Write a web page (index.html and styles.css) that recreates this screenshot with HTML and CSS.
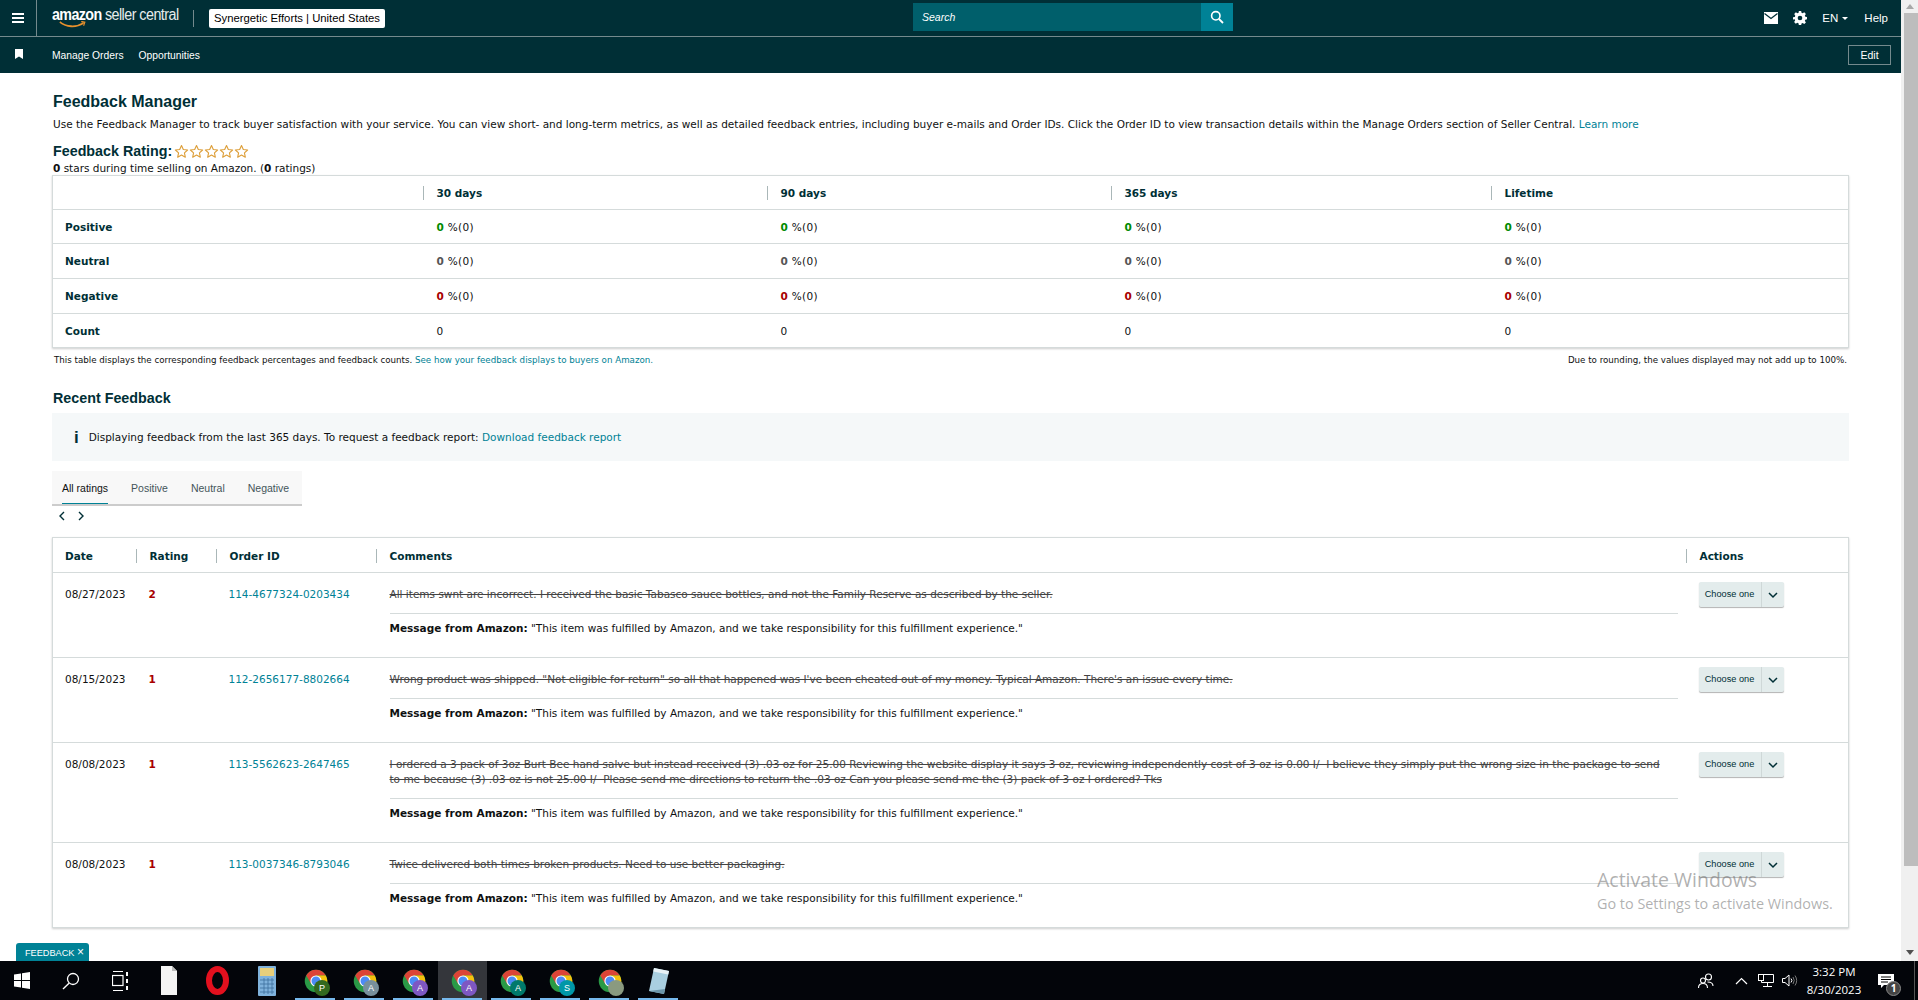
FILE: index.html
```html
<!DOCTYPE html>
<html lang="en">
<head>
<meta charset="utf-8">
<title>Feedback Manager</title>
<link rel="stylesheet" href="styles.css">
</head>
<body>
<svg class="defs" width="0" height="0" aria-hidden="true">
  <symbol id="star" viewBox="0 0 24 24"><path d="M12 2.500l2.900 6.300 6.900.8-5.100 4.700 1.400 6.800-6.100-3.400-6.100 3.400 1.400-6.800L2.200 9.600l6.900-.8z" fill="none" stroke="#dd9f3a" stroke-width="1.800" stroke-linejoin="round"/></symbol>
  <symbol id="chev" viewBox="0 0 12 12"><path d="M2 4l4 4 4-4" fill="none" stroke="#002f36" stroke-width="1.500"/></symbol>
  <symbol id="chrome" viewBox="0 0 32 32">
    <circle cx="16" cy="16" r="15" fill="#2a9a46"/>
    <path d="M3 8.500A15 15 0 0 1 29 8.500L16 8.500 9.500 19.700z" fill="#dc4437"/>
    <path d="M29 8.500A15 15 0 0 1 16 31L22.500 19.700 16 8.500z" fill="#f4c20d"/>
    <circle cx="16" cy="16" r="7.500" fill="#fff"/>
    <circle cx="16" cy="16" r="6" fill="#4c8bf5"/>
  </symbol>
</svg>
<div class="screen">
  <div class="window">
    <div class="page">
      <header class="topbar">
        <button class="burger" aria-label="Menu"><span></span><span></span><span></span></button>
        <div class="logo">
          <span class="logo-text"><b>amazon</b> seller central</span>
          <svg class="smile" width="27" height="7" viewBox="0 0 34 7" preserveAspectRatio="none"><path d="M1 1c8 5 20 6 30 1" fill="none" stroke="#e8912d" stroke-width="1.800"/><path d="M28 .5l4.500 .8-1.500 3.500" fill="none" stroke="#e8912d" stroke-width="1.400"/></svg>
        </div>
        <span class="logo-sep"></span>
        <span class="account">Synergetic Efforts | United States</span>
        <div class="search">
          <span class="search-label">Search</span>
          <span class="search-btn">
            <svg width="14" height="14" viewBox="0 0 14 14"><circle cx="5.800" cy="5.800" r="4.200" fill="none" stroke="#fff" stroke-width="1.600"/><path d="M9 9l4 4" stroke="#fff" stroke-width="1.800"/></svg>
          </span>
        </div>
        <div class="top-right">
          <svg class="top-ico" width="14" height="12" viewBox="0 0 14 12"><path d="M0 0h14v12H0z" fill="#fff"/><path d="M.5 1.500L7 6.500l6.500-5" fill="none" stroke="#002f36" stroke-width="1.300"/></svg>
          <svg class="top-ico" width="14" height="14" viewBox="0 0 24 24"><path fill="#fff" fill-rule="evenodd" d="M10 1h4l.6 3.200 2 .8L19.300 3.200l2.800 2.800-1.800 2.700.8 2 3.100.6v4l-3.100.6-.8 2 1.800 2.700-2.800 2.800-2.700-1.800-2 .8L14 25h-4l-.6-3.200-2-.8-2.700 1.800-2.800-2.800 1.800-2.700-.8-2L0 15.700v-4l3.100-.6.800-2L2.100 6l2.800-2.800L7.600 5l2-.8zM12 9a4 4 0 1 0 0 8 4 4 0 0 0 0-8z" transform="translate(0 -1)"/></svg>
          <span class="lang">EN<i class="caret"></i></span>
          <span class="help">Help</span>
        </div>
      </header>
      <nav class="navbar">
        <svg class="bookmark" width="8" height="10" viewBox="0 0 8 10"><path d="M0 0h8v10L4 7.500 0 10z" fill="#fff"/></svg>
        <a class="nav-link">Manage Orders</a>
        <a class="nav-link">Opportunities</a>
        <span class="edit">Edit</span>
      </nav>

      <main class="content">
        <h1 class="title">Feedback Manager</h1>
        <p class="desc">Use the Feedback Manager to track buyer satisfaction with your service. You can view short- and long-term metrics, as well as detailed feedback entries, including buyer e-mails and Order IDs. Click the Order ID to view transaction details within the Manage Orders section of Seller Central. <a class="link">Learn more</a></p>
        <div class="rating">
          <h2 class="rating-label">Feedback Rating:</h2>
          <span class="stars">
            <svg width="15" height="15"><use href="#star"/></svg><svg width="15" height="15"><use href="#star"/></svg><svg width="15" height="15"><use href="#star"/></svg><svg width="15" height="15"><use href="#star"/></svg><svg width="15" height="15"><use href="#star"/></svg>
          </span>
        </div>
        <p class="stars-line"><b>0</b> stars during time selling on Amazon. (<b>0</b> ratings)</p>

        <table class="card summary">
          <colgroup><col class="s1"><col class="s2"><col class="s2"><col class="s3"><col></colgroup>
          <thead>
            <tr class="r34"><th></th><th><div class="th-in">30 days</div></th><th><div class="th-in">90 days</div></th><th><div class="th-in">365 days</div></th><th><div class="th-in">Lifetime</div></th></tr>
          </thead>
          <tbody>
            <tr class="r34"><th class="rowh">Positive</th><td><b class="good">0</b> %(0)</td><td><b class="good">0</b> %(0)</td><td><b class="good">0</b> %(0)</td><td><b class="good">0</b> %(0)</td></tr>
            <tr class="r35"><th class="rowh">Neutral</th><td><b class="mid">0</b> %(0)</td><td><b class="mid">0</b> %(0)</td><td><b class="mid">0</b> %(0)</td><td><b class="mid">0</b> %(0)</td></tr>
            <tr class="r35"><th class="rowh">Negative</th><td><b class="bad">0</b> %(0)</td><td><b class="bad">0</b> %(0)</td><td><b class="bad">0</b> %(0)</td><td><b class="bad">0</b> %(0)</td></tr>
            <tr class="r34"><th class="rowh">Count</th><td>0</td><td>0</td><td>0</td><td>0</td></tr>
          </tbody>
        </table>
        <div class="foot">
          <span>This table displays the corresponding feedback percentages and feedback counts. <a class="link">See how your feedback displays to buyers on Amazon.</a></span>
          <span>Due to rounding, the values displayed may not add up to 100%.</span>
        </div>

        <h2 class="recent">Recent Feedback</h2>
        <div class="info">
          <span class="info-i">i</span>
          <span>Displaying feedback from the last 365 days. To request a feedback report: <a class="link">Download feedback report</a></span>
        </div>
        <div class="tabs">
          <span class="tab active">All ratings</span>
          <span class="tab">Positive</span>
          <span class="tab">Neutral</span>
          <span class="tab">Negative</span>
        </div>
        <div class="pager">
          <svg width="8" height="10" viewBox="0 0 8 10"><path d="M6 1L2 5l4 4" fill="none" stroke="#002f36" stroke-width="1.400"/></svg>
          <svg width="8" height="10" viewBox="0 0 8 10"><path d="M2 1l4 4-4 4" fill="none" stroke="#002f36" stroke-width="1.400"/></svg>
        </div>

        <table class="card feedback">
          <colgroup><col class="f1"><col class="f2"><col class="f3"><col class="f4"><col></colgroup>
          <thead>
            <tr class="r35"><th><div class="th-in first">Date</div></th><th><div class="th-in">Rating</div></th><th><div class="th-in">Order ID</div></th><th><div class="th-in">Comments</div></th><th><div class="th-in">Actions</div></th></tr>
          </thead>
          <tbody>
            <tr>
              <td>08/27/2023</td><td><b class="bad">2</b></td><td><a class="link">114-4677324-0203434</a></td>
              <td class="comment"><div class="struck">All items swnt are incorrect. I received the basic Tabasco sauce bottles, and not the Family Reserve as described by the seller.</div><div class="msg"><b>Message from Amazon:</b> "This item was fulfilled by Amazon, and we take responsibility for this fulfillment experience."</div></td>
              <td class="act"><div class="choose"><span class="choose-l">Choose one</span><span class="choose-r"><svg width="12" height="12"><use href="#chev"/></svg></span></div></td>
            </tr>
            <tr>
              <td>08/15/2023</td><td><b class="bad">1</b></td><td><a class="link">112-2656177-8802664</a></td>
              <td class="comment"><div class="struck">Wrong product was shipped. "Not eligible for return" so all that happened was I've been cheated out of my money. Typical Amazon. There's an issue every time.</div><div class="msg"><b>Message from Amazon:</b> "This item was fulfilled by Amazon, and we take responsibility for this fulfillment experience."</div></td>
              <td class="act"><div class="choose"><span class="choose-l">Choose one</span><span class="choose-r"><svg width="12" height="12"><use href="#chev"/></svg></span></div></td>
            </tr>
            <tr>
              <td>08/08/2023</td><td><b class="bad">1</b></td><td><a class="link">113-5562623-2647465</a></td>
              <td class="comment"><div class="struck">I ordered a 3 pack of 3oz Burt Bee hand salve but instead received (3) .03 oz for 25.00 Reviewing the website display it says 3 oz, reviewing independently cost of 3 oz is 0.00 I/&nbsp; I believe they simply put the wrong size in the package to send<br>to me because (3) .03 oz is not 25.00 I/&nbsp; Please send me directions to return the .03 oz Can you please send me the (3) pack of 3 oz I ordered? Tks</div><div class="msg"><b>Message from Amazon:</b> "This item was fulfilled by Amazon, and we take responsibility for this fulfillment experience."</div></td>
              <td class="act"><div class="choose"><span class="choose-l">Choose one</span><span class="choose-r"><svg width="12" height="12"><use href="#chev"/></svg></span></div></td>
            </tr>
            <tr>
              <td>08/08/2023</td><td><b class="bad">1</b></td><td><a class="link">113-0037346-8793046</a></td>
              <td class="comment"><div class="struck">Twice delivered both times broken products. Need to use better packaging.</div><div class="msg"><b>Message from Amazon:</b> "This item was fulfilled by Amazon, and we take responsibility for this fulfillment experience."</div></td>
              <td class="act"><div class="choose"><span class="choose-l">Choose one</span><span class="choose-r"><svg width="12" height="12"><use href="#chev"/></svg></span></div></td>
            </tr>
          </tbody>
        </table>
      </main>
      <div class="fb-tab">FEEDBACK <span class="fb-x">×</span></div>
      <div class="activate">
        <div class="act-1">Activate Windows</div>
        <div class="act-2">Go to Settings to activate Windows.</div>
      </div>
    </div>
    <div class="scrollbar">
      <svg class="sb-arrow" width="16" height="13" viewBox="0 0 16 13"><path d="M4 9l4-5 4 5z" fill="#a8a8a8"/></svg>
      <div class="sb-thumb"></div>
      <svg class="sb-arrow" width="16" height="13" viewBox="0 0 16 13"><path d="M4 4l4 5 4-5z" fill="#505050"/></svg>
    </div>
  </div>

  <footer class="taskbar">
    <div class="task-icons">
      <span class="slot"><svg width="16" height="17" viewBox="0 0 16 17"><path fill="#fff" d="M0 2.500l7-1v6.500H0zM8 1.300l8-1.300v8H8zM0 9h7v6.500l-7-1zM8 9h8v8l-8-1.300z"/></svg></span>
      <span class="slot"><svg width="18" height="18" viewBox="0 0 18 18"><circle cx="11" cy="7" r="5.500" fill="none" stroke="#fff" stroke-width="1.300"/><path d="M7 11.200L1 17" stroke="#fff" stroke-width="1.400"/></svg></span>
      <span class="slot"><svg width="16" height="20" viewBox="0 0 16 20"><path d="M1 .5h10M1 19.500h10" stroke="#fff"/><rect x=".5" y="4.500" width="10.500" height="10" fill="none" stroke="#fff" stroke-width="1.200"/><path d="M14 1h2v4h-2zM14 8h2v4h-2zM14 15h2v4h-2z" fill="#fff"/></svg></span>
      <span class="slot"><svg width="16" height="29" viewBox="0 0 16 29"><path d="M0 0h11l5 5v24H0z" fill="#f4f4f4"/><path d="M11 0l5 5h-5z" fill="#bbb"/></svg></span>
      <span class="slot"><svg width="23" height="29" viewBox="0 0 23 29"><ellipse cx="11.500" cy="14.500" rx="8.500" ry="11.500" fill="none" stroke="#e3101e" stroke-width="6"/></svg></span>
      <span class="slot"><svg width="18" height="30" viewBox="0 0 18 30"><rect width="18" height="30" rx="1" fill="#7fb2dc"/><rect x="2" y="2" width="14" height="8" fill="#e8cf7a"/><path d="M2 14h14M2 18h14M2 22h14M2 26h14M6 12v16M10 12v16M14 12v16" stroke="#3d6f9c" stroke-width=".8"/></svg></span>
      <span class="slot open"><svg width="24" height="24"><use href="#chrome"/></svg><span class="badge b-p">P</span></span>
      <span class="slot open"><svg width="24" height="24"><use href="#chrome"/></svg><span class="badge b-g">A</span></span>
      <span class="slot open"><svg width="24" height="24"><use href="#chrome"/></svg><span class="badge b-v">A</span></span>
      <span class="slot open current"><svg width="24" height="24"><use href="#chrome"/></svg><span class="badge b-v">A</span></span>
      <span class="slot open"><svg width="24" height="24"><use href="#chrome"/></svg><span class="badge b-t">A</span></span>
      <span class="slot open"><svg width="24" height="24"><use href="#chrome"/></svg><span class="badge b-c">S</span></span>
      <span class="slot open"><svg width="24" height="24"><use href="#chrome"/></svg><span class="badge b-ph"></span></span>
      <span class="slot open"><svg width="22" height="28" viewBox="0 0 22 28"><path d="M6 1l15 3-5 23L1 24z" fill="#a9cfe0"/><path d="M6 1l15 3-.8 3.500-15-3z" fill="#e8f2f6"/><path d="M1 24l15 3 1-5z" fill="#6c97ab"/></svg></span>
    </div>
    <div class="tray">
      <svg class="t-people" width="16" height="16" viewBox="0 0 16 16"><circle cx="10.500" cy="4" r="3" fill="none" stroke="#fff" stroke-width="1.100"/><circle cx="5" cy="7.500" r="2.500" fill="none" stroke="#fff" stroke-width="1.100"/><path d="M.5 15c0-3 2-4.500 4.500-4.500S9.500 12 9.500 15M9.500 9c3 0 5.500 1 5.500 4" fill="none" stroke="#fff" stroke-width="1.100"/></svg>
      <svg class="t-up" width="13" height="8" viewBox="0 0 13 8"><path d="M1 7l5.500-5.500L12 7" fill="none" stroke="#fff" stroke-width="1.200"/></svg>
      <svg class="t-net" width="16" height="13" viewBox="0 0 16 13"><path d="M3.500 .5h12v8h-12z M9.500 8.500v3.500M5 12.500h9" fill="none" stroke="#fff"/><rect x=".5" y=".5" width="5" height="6" fill="#000" stroke="#fff"/></svg>
      <svg class="t-vol" width="16" height="13" viewBox="0 0 16 13"><path d="M.5 4.500h2.500L7 1v11L3 8.500H.5z" fill="none" stroke="#fff"/><path d="M9 4.500a3 3 0 0 1 0 4" fill="none" stroke="#fff"/><path d="M11 3a6 6 0 0 1 0 7M13 1.500a9 9 0 0 1 0 10" fill="none" stroke="#777"/></svg>
      <div class="clock"><span>3:32 PM</span><span>8/30/2023</span></div>
      <div class="notif">
        <svg width="16" height="14" viewBox="0 0 16 14"><path d="M0 0h16v11H6l-3 3v-3H0z" fill="#fff"/><path d="M3 3h10M3 5.500h10M3 8h7" stroke="#000"/></svg>
        <span class="notif-n">1</span>
      </div>
      <span class="desk"></span>
    </div>
  </footer>
</div>
</body>
</html>
```

FILE: styles.css
```css
* { box-sizing: border-box; }
html, body { margin: 0; height: 100%; overflow: hidden; }
body { font: 10.500px/15px "DejaVu Sans", sans-serif; color: #0f1111; background: #fff; }
.defs { position: absolute; }
p, h1, h2 { margin: 0; }
.screen { display: flex; flex-direction: column; height: 1000px; }
.window { display: flex; flex: none; height: 961px; }
.page { position: relative; flex: 1; min-width: 0; overflow: hidden; }

/* header */
.topbar { display: flex; align-items: center; height: 37px; background: #002f36; border-bottom: 1px solid #748a8d; color: #fff; }
.burger { display: flex; flex-direction: column; justify-content: center; gap: 2px; width: 37px; height: 36px; padding: 0 12px; background: none; border: 0; border-right: 1px solid #748a8d; }
.burger span { display: block; height: 2px; background: #fff; }
.logo { position: relative; margin-left: 15px; height: 26px; width: 128px; }
.logo-text { display: inline-block; transform: scaleX(.894); transform-origin: left; font: 16px/20px "Liberation Sans", sans-serif; letter-spacing: -.6px; white-space: nowrap; color: #e6ecec; }
.logo-text b { font-weight: 700; letter-spacing: -.7px; color: #fff; }
.smile { position: absolute; left: 7px; top: 16px; }
.logo-sep { width: 1px; height: 17px; margin-left: 13px; background: #748a8d; }
.account { margin-left: 15px; width: 176px; height: 19px; background: #fff; color: #000; border-radius: 2px; font: 11.300px/19px "Liberation Sans", sans-serif; text-align: center; white-space: nowrap; }
.search { display: flex; align-items: center; justify-content: space-between; width: 320px; height: 28px; margin: 0 0 2px 528px; background: #005f6b; }
.search-label { padding-left: 9px; font: italic 10.500px "Liberation Sans", sans-serif; color: #fff; }
.search-btn { display: flex; align-items: center; justify-content: center; width: 32px; height: 28px; background: #008296; }
.top-right { display: flex; align-items: center; margin-left: auto; padding-right: 13px; font: 11.500px "Liberation Sans", sans-serif; }
.top-ico { margin-right: 15px; }
.lang { display: flex; align-items: center; gap: 4px; margin-right: 16px; }
.caret { width: 0; height: 0; border: 3px solid transparent; border-top: 3px solid #fff; border-bottom: 0; }
.navbar { display: flex; align-items: center; height: 36px; background: #002f36; color: #fff; font: 10.300px "Liberation Sans", sans-serif; }
.bookmark { margin: 0 0 2px 15px; }
.nav-link { margin-left: 15px; }
.nav-link:first-of-type { margin-left: 29px; }
.edit { margin-left: auto; margin-right: 10px; width: 43px; height: 20px; line-height: 18px; text-align: center; border: 1px solid #748a8d; font-size: 10.500px; }

/* content */
.content { padding: 0 52px; }
.title { margin-top: 19px; padding-left: 1px; font: 700 16px/19px "Liberation Sans", sans-serif; color: #002f36; }
.desc { margin-top: 6px; padding-left: 1px; white-space: nowrap; }
.link { color: #008296; }
.rating { display: flex; align-items: center; gap: 2px; margin-top: 10px; padding-left: 1px; height: 18px; }
.rating-label { font: 700 14.300px/18px "Liberation Sans", sans-serif; color: #002f36; }
.stars { display: flex; }
.stars-line { margin-top: 2px; padding-left: 1px; line-height: 13px; }
.card { width: 100%; table-layout: fixed; border-collapse: collapse; border: 1px solid #d5dbdb; box-shadow: 0 1px 2px rgba(0,0,0,.2); }
.card th, .card td { padding: 0; border-top: 1px solid #d5dbdb; text-align: left; vertical-align: middle; }
.card th { font-weight: 700; color: #002f36; }
.r34 { height: 34px; }
.r35 { height: 35px; }
.s1 { width: 371px; }
.s2 { width: 344px; }
.s3 { width: 380px; }
.th-in { height: 14px; margin-left: -1px; padding-left: 13px; border-left: 1px solid #aab7b8; line-height: 14px; }
.th-in.first { border-left: 0; }
.rowh { padding-left: 12px !important; }
.summary td { padding-left: 13px; letter-spacing: .3px; }
.summary tbody td, .summary .rowh { padding-top: 1px; }
.good { color: #008a00; }
.mid { color: #555; }
.bad { color: #a80000; }
.foot { display: flex; justify-content: space-between; margin-top: 6px; padding: 0 2px; font-size: 8.700px; line-height: 13px; white-space: nowrap; }
.recent { margin-top: 22px; padding-left: 1px; font: 700 14.300px/18px "Liberation Sans", sans-serif; color: #002f36; }
.info { display: flex; align-items: center; gap: 10px; height: 48px; margin-top: 6px; padding-left: 22px; background: #f5f8f9; }
.info-i { font: 700 17px/15px "Liberation Sans", sans-serif; color: #002f36; }
.tabs { display: flex; align-items: flex-start; width: 250px; height: 35px; margin-top: 10px; padding-left: 10px; gap: 23px; background: #f8f8f8; border-bottom: 2px solid #ccc; font: 10.500px "Liberation Sans", sans-serif; }
.tab { height: 33px; padding-top: 10px; line-height: 15px; color: #44555a; }
.tab.active { color: #0f1111; border-bottom: 1px solid #008296; }
.pager { display: flex; align-items: center; gap: 11px; height: 19px; padding-left: 6px; }
.feedback { margin-top: 12px; }
.feedback thead th { padding-top: 2px; }
.f1 { width: 84px; }
.f2 { width: 80px; }
.f3 { width: 160px; }
.f4 { width: 1310px; }
.feedback td { vertical-align: top; padding-top: 14px; padding-left: 12px; }
.feedback td.comment { padding: 14px 9px 21px 13px; }
.struck { text-decoration: line-through; color: #444; padding-bottom: 11px; border-bottom: 1px solid #d5dbdb; }
.msg { padding-top: 7px; }
.feedback td.act { padding: 9px 0 0 12px; }
.choose { display: flex; width: 85px; height: 25px; background: #e3ecec; border-radius: 2px; box-shadow: 0 1px 1px rgba(0,0,0,.3); font: 9.200px/25px "Liberation Sans", sans-serif; color: #002f36; }
.choose-l { flex: 1; text-align: center; border-right: 1px solid #cfd8d8; }
.choose-r { display: flex; align-items: center; justify-content: center; width: 22px; }
.fb-tab { position: absolute; left: 16px; bottom: 0; width: 73px; height: 18px; padding-top: 1px; padding-left: 4px; background: #008296; color: #fff; border-radius: 3px 3px 0 0; font: 9.200px/17px "Liberation Sans", sans-serif; text-align: center; white-space: nowrap; }
.fb-x { font-size: 12px; }
.activate { position: absolute; left: 1597px; top: 866px; color: rgba(110,110,110,.55); font-family: "Open Sans", sans-serif; white-space: nowrap; }
.act-1 { font-size: 19.500px; line-height: 28px; }
.act-2 { font-size: 14.400px; line-height: 20px; }

/* scrollbar */
.scrollbar { display: flex; flex-direction: column; align-items: flex-end; width: 17px; background: #f0f0f0; }
.sb-arrow { flex: none; }
.sb-thumb { flex: none; width: 14px; height: 853px; background: #bdbdbd; }
.sb-arrow:last-child { margin-top: auto; margin-bottom: 2px; }

/* taskbar */
.taskbar { display: flex; justify-content: space-between; flex: none; height: 39px; background: #03050a; color: #fff; font: 11.500px "Open Sans", sans-serif; }
.task-icons { display: flex; margin-left: -3px; }
.slot { position: relative; display: flex; align-items: center; justify-content: center; width: 49px; height: 39px; }
.slot.open::after { content: ""; position: absolute; left: 4px; right: 5px; bottom: 0; height: 2px; background: #76b9ed; }
.slot.current { background: #34363b; }
.badge { position: absolute; left: 23px; top: 19px; width: 16px; height: 16px; border-radius: 50%; color: #fff; font: 9px/16px "Liberation Sans", sans-serif; text-align: center; }
.b-p { background: #33691e; }
.b-g { background: #78909c; }
.b-v { background: #7e57c2; }
.b-t { background: #00796b; }
.b-c { background: #0097a7; }
.b-ph { background: #8a9a80; }
.tray { display: flex; align-items: center; }
.t-people { margin-right: 21px; }
.t-up { margin-right: 10px; }
.t-net { margin-right: 8px; }
.t-vol { margin-right: 6px; }
.clock { display: flex; flex-direction: column; align-items: center; width: 60px; line-height: 18px; }
.notif { position: relative; display: flex; margin-left: 14px; margin-right: 20px; }
.notif-n { position: absolute; left: 8px; top: 7px; width: 15px; height: 15px; border-radius: 50%; background: #444; border: 1px solid #888; font: 700 10px/13px "Open Sans", sans-serif; text-align: center; }
.desk { width: 1px; height: 39px; background: #555; margin-right: 3px; }
```
